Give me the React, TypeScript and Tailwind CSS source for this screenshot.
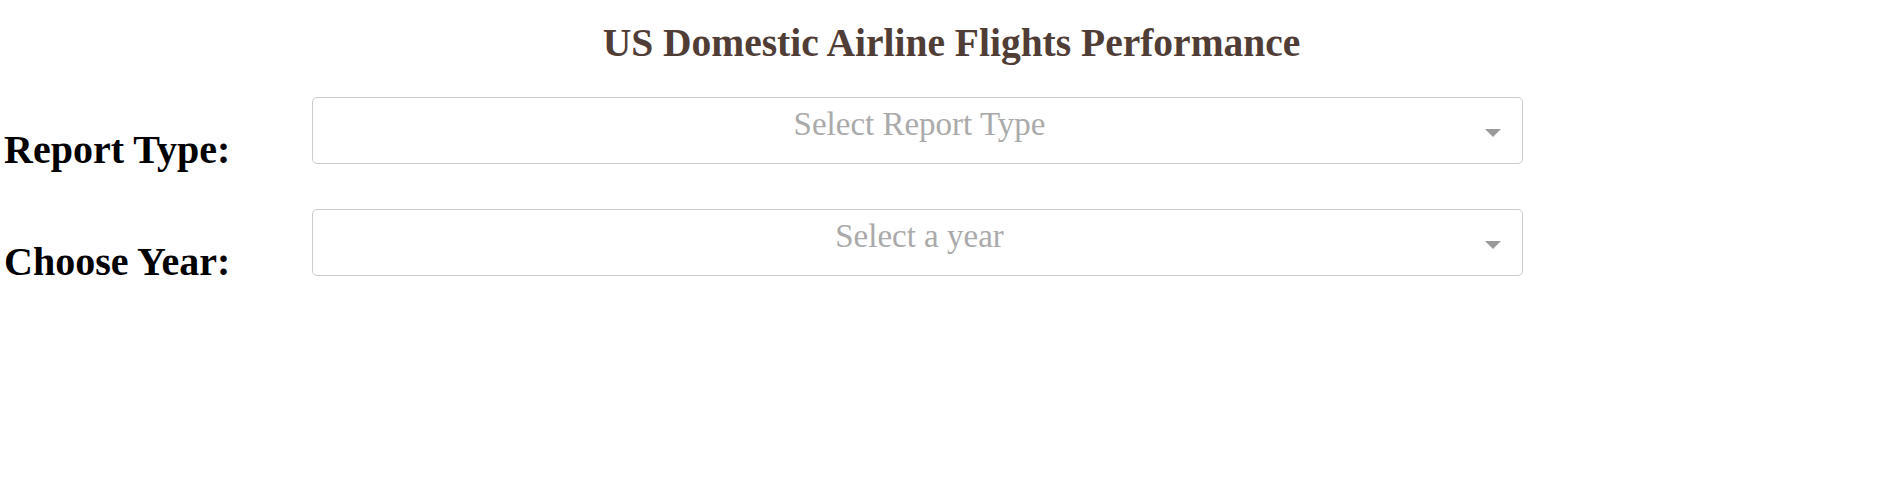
export default function App() {
  const rows = [
    { label: "Report Type:", placeholder: "Select Report Type" },
    { label: "Choose Year:", placeholder: "Select a year" },
  ];

  return (
    <div className="min-h-[493px] w-full bg-white font-['Liberation_Serif','Times_New_Roman',serif]">
      <h1 className="pt-[21px] pl-[12px] text-center text-[39.5px] font-bold leading-[45px] text-[#503D36]">
        US Domestic Airline Flights Performance
      </h1>

      <div className="mt-[31px] flex flex-col gap-[36px]">
        {rows.map((row) => (
          <div key={row.label} className="flex items-start">
            <div className="mt-[30px] w-[312px] pl-[4px] text-[40px] font-bold leading-[46px] text-black">
              {row.label}
            </div>
            <div className="relative h-[67px] w-[1211px] rounded-[5px] border border-[#cccccc] bg-white pt-[6px]">
              <div className="pl-[4px] text-center text-[33px] leading-[40px] text-[#aaaaaa]">
                {row.placeholder}
              </div>
              <div className="absolute right-[21px] top-[31px] h-0 w-0 border-x-[8px] border-t-[8px] border-x-transparent border-t-[#999999]" />
            </div>
          </div>
        ))}
      </div>
    </div>
  );
}
